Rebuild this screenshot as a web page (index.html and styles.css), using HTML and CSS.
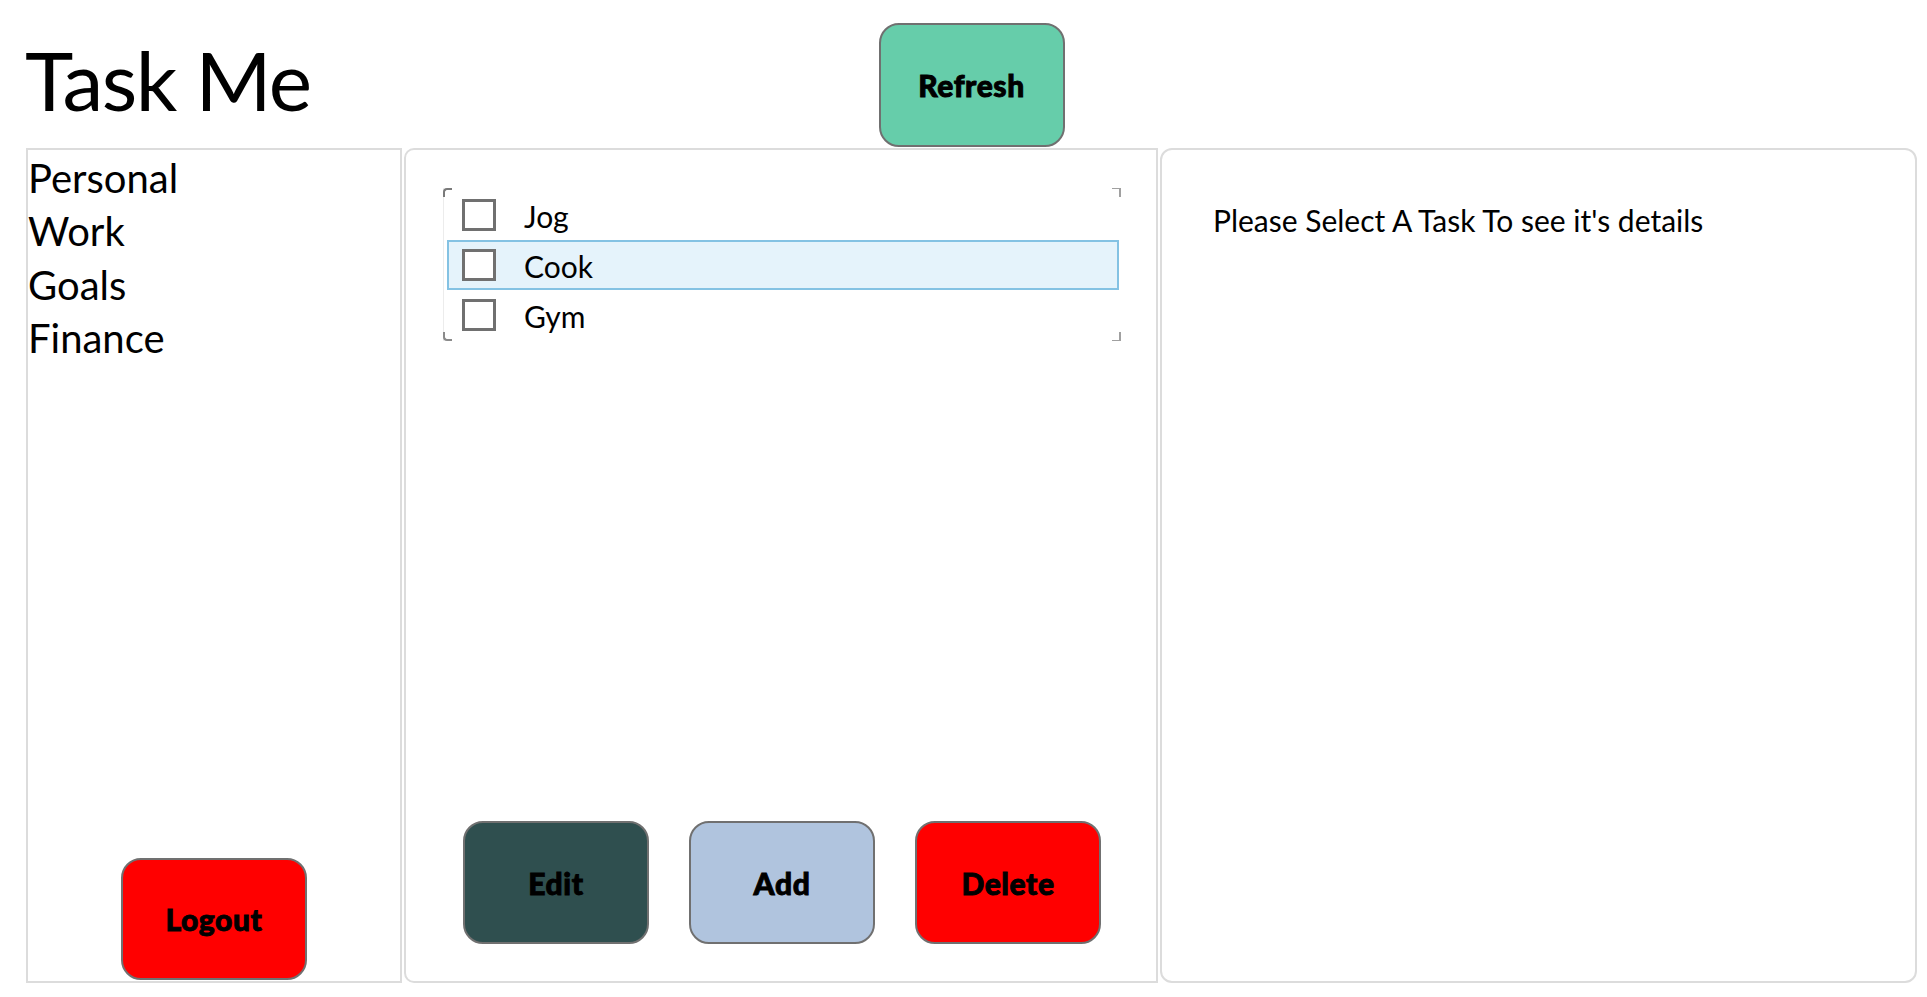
FILE: index.html
```html
<!DOCTYPE html>
<html>
<head>
<meta charset="utf-8">
<title>Task Me</title>
<link rel="stylesheet" href="styles.css">
</head>
<body>
<div class="app">
  <header class="header">
    <h1 class="title">Task Me</h1>
    <button class="btn btn-refresh">Refresh</button>
    <div></div>
  </header>
  <main class="panels">
    <aside class="panel panel-left">
      <ul class="categories">
        <li>Personal</li>
        <li>Work</li>
        <li>Goals</li>
        <li>Finance</li>
      </ul>
      <button class="btn btn-red btn-logout">Logout</button>
    </aside>
    <section class="panel panel-mid">
      <div class="tasklist">
        <span class="corner tl"></span>
        <span class="corner tr"></span>
        <span class="corner bl"></span>
        <span class="corner br"></span>
        <div class="task"><span class="check"></span><span class="task-name">Jog</span></div>
        <div class="task selected"><span class="check"></span><span class="task-name">Cook</span></div>
        <div class="task"><span class="check"></span><span class="task-name">Gym</span></div>
      </div>
      <div class="actions">
        <button class="btn btn-edit">Edit</button>
        <button class="btn btn-add">Add</button>
        <button class="btn btn-red">Delete</button>
      </div>
    </section>
    <section class="panel panel-right">
      <p class="details">Please Select A Task To see it's details</p>
    </section>
  </main>
</div>
</body>
</html>
```
FILE: styles.css
```css
* { box-sizing: border-box; }
html, body { margin: 0; padding: 0; background: #fff; }
body {
  font-family: Lato, "Open Sans", sans-serif;
  color: #000;
  width: 1927px;
  height: 997px;
  overflow: hidden;
}
.app {
  padding: 0 10px 0 26px;
  display: flex;
  flex-direction: column;
  height: 997px;
}
.header {
  height: 148px;
  display: grid;
  grid-template-columns: 1fr auto 1fr;
  align-items: start;
}
.title {
  margin: 0;
  font-weight: 400;
  font-size: 82px;
  line-height: 100px;
  padding-top: 29px;
  margin-left: -1px;
  letter-spacing: -1.5px;
}
.btn {
  width: 186px;
  height: 123px;
  border: 2px solid #707070;
  border-radius: 20px;
  font-family: Lato, "Open Sans", sans-serif;
  font-weight: 900;
  font-size: 30px;
  color: #000;
  padding: 0;
  letter-spacing: 0.6px;
  -webkit-text-stroke: 0.9px #000;
}
.btn-refresh {
  margin-top: 23px;
  height: 124px;
  background: #66cdaa;
}
.btn-red { background: #ff0000; }
.btn-edit { background: #2f4f4f; }
.btn-add { background: #b0c4de; }
.panels {
  display: flex;
  height: 835px;
  gap: 2px;
}
.panel {
  border: 2px solid #dcdcdc;
  height: 835px;
}
.panel-left {
  width: 376px;
  display: flex;
  flex-direction: column;
  align-items: center;
  padding-bottom: 1px;
}
.categories {
  list-style: none;
  margin: 0;
  padding: 2px 0 0 0;
  align-self: stretch;
  flex: 1;
  font-size: 40px;
  line-height: 53.3px;
}
.btn-logout { height: 122px; }
.panel-mid {
  width: 754px;
  border-radius: 10px 0 0 10px;
  display: flex;
  flex-direction: column;
  padding: 38px 35px 37px 37px;
}
.tasklist {
  position: relative;
  height: 153px;
  padding: 2px 2px 1px 3px;
  border-left: 1px solid #ececec;
  flex: none;
}
.corner {
  position: absolute;
  width: 9px;
  height: 9px;
  border-color: #7a7a7a;
  border-style: solid;
  border-width: 0;
}
.corner.tl { top: 0; left: -1px; border-top-width: 2px; border-left-width: 2px; border-top-left-radius: 4px; }
.corner.tr { top: 0; right: 0; border-top-width: 1px; border-right-width: 2px; border-color: #a0a0a0; }
.corner.bl { bottom: 0; left: -1px; border-bottom-width: 2px; border-left-width: 2px; border-bottom-left-radius: 4px; border-color: #8a8a8a; }
.corner.br { bottom: 0; right: 0; border-bottom-width: 1px; border-right-width: 2px; border-color: #a0a0a0; }
.task {
  height: 50px;
  display: flex;
  align-items: center;
  border: 2px solid transparent;
  padding-left: 13px;
  font-size: 30px;
}
.task.selected {
  background: #e5f3fb;
  border-color: #84c2e3;
}
.check {
  width: 34px;
  height: 32px;
  border: 3px solid #707070;
  background: #fff;
  flex: none;
}
.task-name {
  margin-left: 28px;
  line-height: 36px;
  padding-top: 2px;
}
.actions {
  margin-top: auto;
  display: flex;
  justify-content: center;
  gap: 40px;
  padding-left: 0;
}
.panel-right {
  flex: 1;
  border-radius: 12px;
  padding: 52px 20px 0 51px;
}
.details {
  margin: 0;
  font-size: 30px;
  line-height: 36px;
}
```
